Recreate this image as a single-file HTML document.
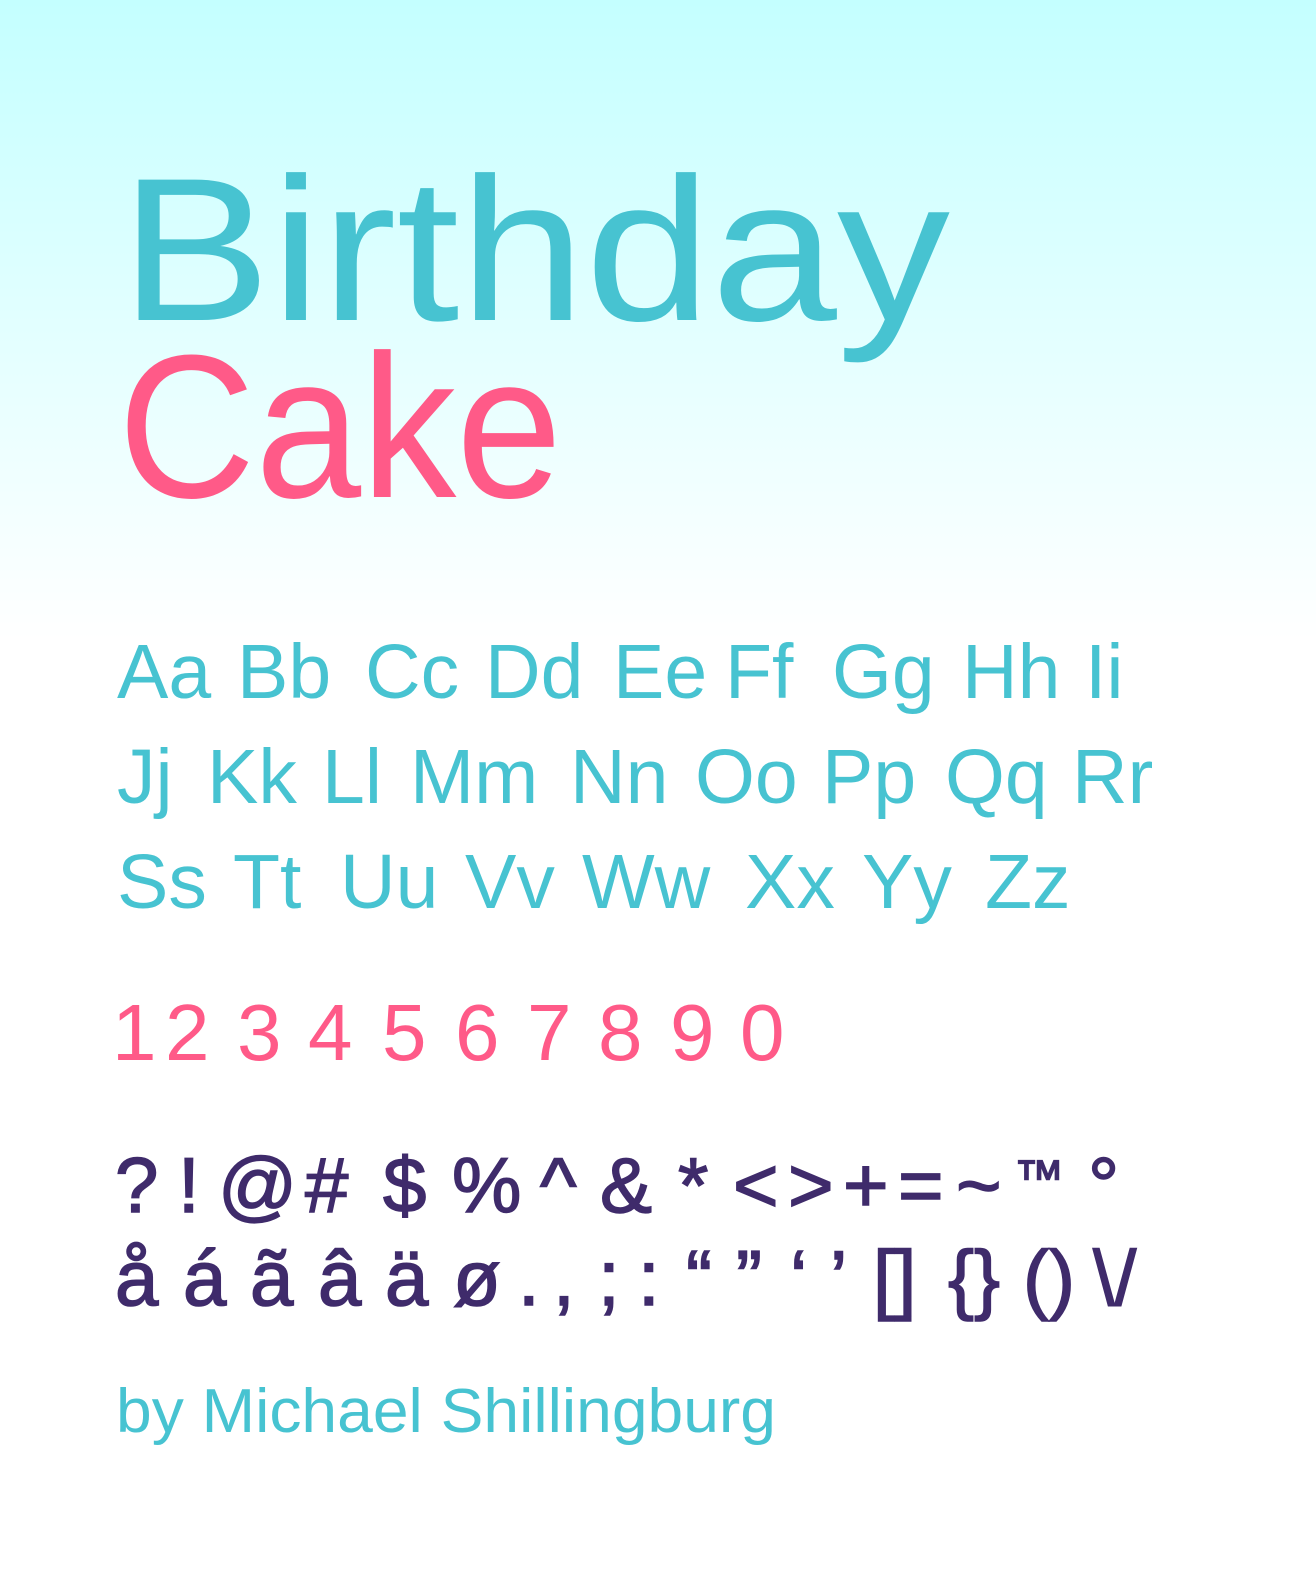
<!DOCTYPE html>
<html><head><meta charset="utf-8"><style>
html,body{margin:0;padding:0;width:1316px;height:1570px;overflow:hidden;background:#fff}
svg{display:block}
text{font-family:"Liberation Sans",sans-serif}
.t{fill:#47C3D1}.p{fill:#FF5A88}.u{fill:#3F2B6B}
</style></head><body>
<svg width="1316" height="1570" viewBox="0 0 1316 1570" xmlns="http://www.w3.org/2000/svg">
<defs><linearGradient id="g" x1="0" y1="0" x2="0" y2="1">
<stop offset="0" stop-color="#C4FFFF"/><stop offset="1" stop-color="#FFFFFF"/></linearGradient></defs>
<rect width="1316" height="640" fill="url(#g)"/>
<text class="t" x="120" y="320" font-size="204" textLength="830" lengthAdjust="spacingAndGlyphs">Birthday</text>
<text class="p" x="118" y="497" font-size="204" textLength="444" lengthAdjust="spacingAndGlyphs">Cake</text>
<g class="t" font-size="77">
<text x="117" y="698">Aa</text><text x="237" y="698">Bb</text><text x="365" y="698">Cc</text><text x="485" y="698">Dd</text><text x="613" y="698">Ee</text><text x="725" y="698">Ff</text><text x="832" y="698">Gg</text><text x="962" y="698">Hh</text><text x="1085" y="698">Ii</text>
<text x="117" y="803">Jj</text><text x="207" y="803">Kk</text><text x="322" y="803">Ll</text><text x="410" y="803">Mm</text><text x="570" y="803">Nn</text><text x="695" y="803">Oo</text><text x="822" y="803">Pp</text><text x="945" y="803">Qq</text><text x="1072" y="803">Rr</text>
<text x="117" y="908">Ss</text><text x="233" y="908">Tt</text><text x="340" y="908">Uu</text><text x="465" y="908">Vv</text><text x="582" y="908">Ww</text><text x="745" y="908">Xx</text><text x="862" y="908">Yy</text><text x="985" y="908">Zz</text>
</g>
<g class="p" font-size="80">
<text x="112" y="1060">1</text><text x="165" y="1060">2</text><text x="237" y="1060">3</text><text x="308" y="1060">4</text><text x="382" y="1060">5</text><text x="455" y="1060">6</text><text x="527" y="1060">7</text><text x="598" y="1060">8</text><text x="670" y="1060">9</text><text x="740" y="1060">0</text>
</g>
<g class="u" font-size="78" stroke="#3F2B6B" stroke-width="1.5">
<text x="115" y="1212">?</text><text x="178" y="1212">!</text><text x="218" y="1212">@</text><text x="305" y="1212">#</text><text x="383" y="1212">$</text><text x="452" y="1212">%</text><text x="540" y="1212">^</text><text x="600" y="1212">&amp;</text><text x="678" y="1212">*</text><text x="733" y="1212">&lt;</text><text x="788" y="1212">&gt;</text><text x="843" y="1212">+</text><text x="898" y="1212">=</text><text x="956" y="1212">~</text><text x="1014" y="1195" font-size="50">™</text><text x="1088" y="1212">°</text>
<text x="115" y="1305">å</text><text x="183" y="1305">á</text><text x="250" y="1305">ã</text><text x="318" y="1305">â</text><text x="385" y="1305">ä</text><text x="453" y="1305">ø</text><text x="518" y="1305">.</text><text x="553" y="1305">,</text><text x="598" y="1305">;</text><text x="638" y="1305">:</text><text x="686" y="1305">“</text><text x="736" y="1305">”</text><text x="790" y="1305">‘</text><text x="830" y="1305">’</text><text x="873" y="1305">[]</text><text x="948" y="1305">{}</text><text x="1023" y="1305">()</text><text x="1093" y="1305">\/</text>
</g>
<text class="t" x="116" y="1432" font-size="62" textLength="660" lengthAdjust="spacingAndGlyphs">by Michael Shillingburg</text>
</svg>
</body></html>
